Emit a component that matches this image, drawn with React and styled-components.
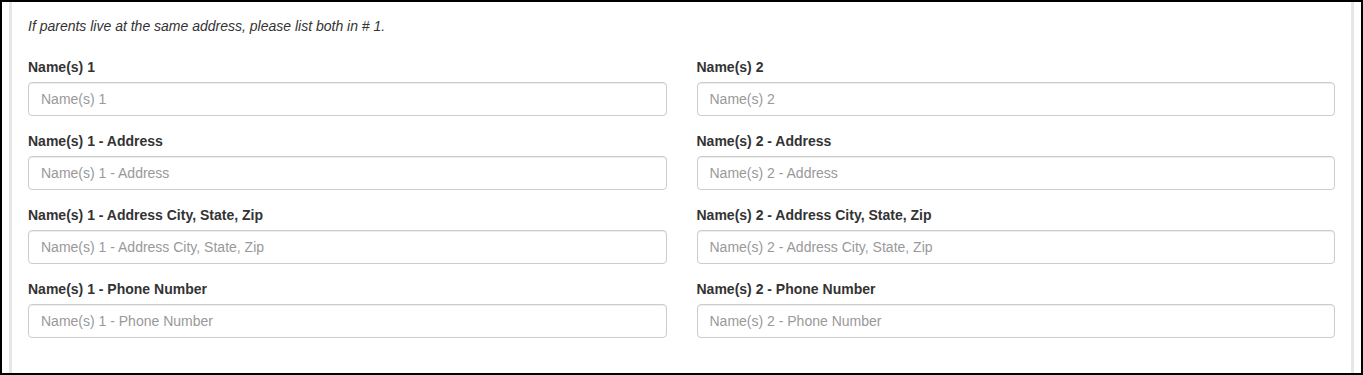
import React from 'react'
import styled, {createGlobalStyle} from 'styled-components'

const fields = [
    ['Name(s) 1', 'Name(s) 2'],
    ['Name(s) 1 - Address', 'Name(s) 2 - Address'],
    ['Name(s) 1 - Address City, State, Zip', 'Name(s) 2 - Address City, State, Zip'],
    ['Name(s) 1 - Phone Number', 'Name(s) 2 - Phone Number'],
]

const App = () => {
    return (
        <Frame>
            <GlobalStyle />
            <Panel>
                <Note>If parents live at the same address, please list both in # 1.</Note>
                <FormGrid>
                    {fields.flat().map(name => (
                        <FormGroup key={name}>
                            <Label>{name}</Label>
                            <Input type="text" placeholder={name} />
                        </FormGroup>
                    ))}
                </FormGrid>
            </Panel>
        </Frame>
    )
}

const GlobalStyle = createGlobalStyle`
    * {
        box-sizing: border-box;
    }
    body {
        margin: 0;
        background: #fff;
        font-family: "Liberation Sans", Arial, Helvetica, sans-serif;
        font-size: 14px;
        line-height: 20px;
        color: #333;
    }
`

const Frame = styled.div`
    width: 1363px;
    height: 375px;
    border: 2px solid #000;
    padding: 0 7px;
    overflow: hidden;
`

const Panel = styled.div`
    height: 100%;
    border-left: 3px solid #e6e6e6;
    border-right: 3px solid #e6e6e6;
    padding: 14px 16px 0;
`

const Note = styled.p`
    margin: 0 0 21px;
    font-style: italic;
`

const FormGrid = styled.div`
    display: grid;
    grid-template-columns: 1fr 1fr;
    column-gap: 30px;
`

const FormGroup = styled.div`
    margin-bottom: 15px;
`

const Label = styled.label`
    display: block;
    margin-bottom: 5px;
    font-weight: bold;
`

const Input = styled.input`
    display: block;
    width: 100%;
    height: 34px;
    padding: 6px 12px;
    font-family: inherit;
    font-size: 14px;
    line-height: 20px;
    color: #555;
    background: #fff;
    border: 1px solid #ccc;
    border-radius: 4px;
    box-shadow: inset 0 1px 1px rgba(0,0,0,.075);
    outline: none;

    &::placeholder {
        color: #999;
    }
`

export default App
